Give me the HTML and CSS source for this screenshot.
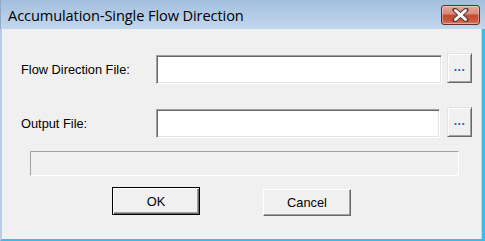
FILE: index.html
```html
<!DOCTYPE html>
<html>
<head>
<meta charset="utf-8">
<link rel="stylesheet" href="styles.css">
</head>
<body>
<div class="window">
  <div class="titlebar">
    <span class="title">Accumulation-Single Flow Direction</span>
    <div class="close">
      <svg width="19" height="14" viewBox="0 0 19 14">
        <path d="M4 2 L15 12 M15 2 L4 12" stroke="#5a3a36" stroke-width="5" stroke-linecap="round"/>
        <path d="M4.5 2.5 L14.5 11.5 M14.5 2.5 L4.5 11.5" stroke="#ffffff" stroke-width="3" stroke-linecap="round"/>
      </svg>
    </div>
  </div>
  <div class="client">
    <div class="fields">
      <div class="label">Flow Direction File:</div>
      <div class="textbox"></div>
      <div class="browse">...</div>
      <div class="label">Output File:</div>
      <div class="textbox short"></div>
      <div class="browse">...</div>
    </div>
    <div class="progress"></div>
    <div class="actions">
      <div class="btn default">OK</div>
      <div class="btn cancel">Cancel</div>
    </div>
  </div>
</div>
</body>
</html>
```
FILE: styles.css
```css
html, body {
  margin: 0;
  padding: 0;
}
body {
  width: 485px;
  height: 241px;
  overflow: hidden;
  background: #f0f0f0;
}
.window {
  width: 485px;
  height: 241px;
  display: flex;
  flex-direction: column;
  box-sizing: border-box;
}
.titlebar {
  height: 29px;
  flex: none;
  background: linear-gradient(#a3bfdd, #c2d7ed);
  display: flex;
  align-items: flex-start;
  justify-content: space-between;
  padding-left: 7px;
  padding-right: 5px;
  box-sizing: border-box;
  border-left: 1px solid #8fa9c7;
}
.title {
  font-family: "Open Sans", sans-serif;
  font-size: 14.6px;
  color: #000;
  line-height: 16px;
  margin-top: 7px;
  letter-spacing: -0.1px;
}
.close {
  margin-top: 5px;
  width: 39px;
  height: 20px;
  box-sizing: border-box;
  border: 1px solid #6b2a22;
  border-radius: 3px;
  background: linear-gradient(#e3a99d 0%, #d88877 45%, #c44a34 50%, #c8553c 80%, #d77e5f 100%);
  box-shadow: inset 0 0 0 1px rgba(255,255,255,0.35);
  display: flex;
  align-items: center;
  justify-content: center;
}
.close svg {
  display: block;
}
.client {
  flex: 1;
  background: #f0f0f0;
  border-left: 2px solid #b8cde3;
  border-right: 3px solid #3cbbe8;
  border-bottom: 2px solid #3cbbe8;
  box-shadow: inset -1px 0 0 #d4d4d4;
  display: flex;
  flex-direction: column;
  font-family: "Liberation Sans", Arial, sans-serif;
  font-size: 12.8px;
  color: #000;
}
.fields {
  display: grid;
  grid-template-columns: 130px 286px 25px;
  grid-auto-rows: 30px;
  column-gap: 5px;
  row-gap: 24px;
  margin-top: 24px;
  padding-left: 19px;
}
.label {
  align-self: center;
  margin-top: 3px;
  white-space: nowrap;
}
.textbox {
  margin-top: 2px;
  height: 29px;
  box-sizing: border-box;
  background: #fff;
  border-top: 1px solid #a0a0a0;
  border-left: 1px solid #a0a0a0;
  border-bottom: 1px solid #fff;
  border-right: 1px solid #fff;
  box-shadow: inset 1px 1px 0 #696969, inset -1px -1px 0 #e3e3e3;
}
.textbox.short {
  width: 284px;
}
.browse {
  height: 30px;
  box-sizing: border-box;
  background: #f0f0f0;
  border-top: 1px solid #e3e3e3;
  border-left: 1px solid #e3e3e3;
  border-bottom: 1px solid #696969;
  border-right: 1px solid #696969;
  box-shadow: inset 1px 1px 0 #fff, inset -1px -1px 0 #a0a0a0;
  color: #1565b5;
  font-weight: bold;
  font-size: 12px;
  display: flex;
  align-items: center;
  justify-content: center;
  padding-bottom: 2px;
  letter-spacing: 0.5px;
}
.progress {
  margin-top: 14px;
  margin-left: 28px;
  width: 429px;
  height: 25px;
  box-sizing: border-box;
  border-top: 1px solid #a0a0a0;
  border-left: 1px solid #a0a0a0;
  border-bottom: 1px solid #fff;
  border-right: 1px solid #fff;
}
.actions {
  display: flex;
  align-items: flex-start;
  margin-top: 11px;
  padding-left: 110px;
  column-gap: 63px;
}
.btn {
  width: 88px;
  height: 27px;
  box-sizing: border-box;
  background: #f0f0f0;
  border-top: 1px solid #fff;
  border-left: 1px solid #fff;
  border-bottom: 1px solid #696969;
  border-right: 1px solid #696969;
  box-shadow: inset -1px -1px 0 #a0a0a0;
  display: flex;
  align-items: center;
  justify-content: center;
}
.btn.default {
  height: 28px;
  border: 1px solid #000;
  box-shadow: inset 1px 1px 0 #fff, inset -1px -1px 0 #696969, inset -2px -2px 0 #a0a0a0;
}
.btn.cancel {
  margin-top: 2px;
}
```
